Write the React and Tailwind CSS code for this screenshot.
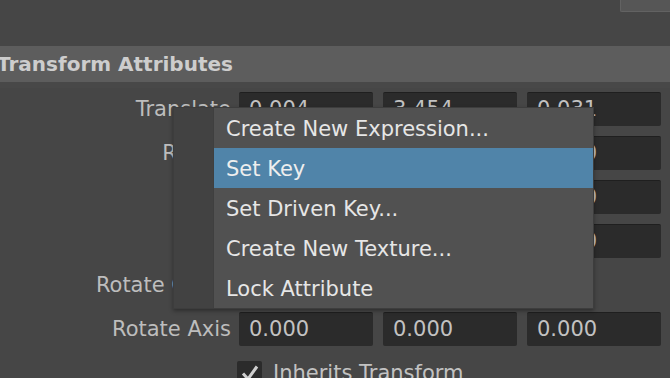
import React from "react";

const font = { fontFamily: '"DejaVu Sans", "Liberation Sans", sans-serif' };

function Field({ value }) {
  return (
    <div className="w-[134px] h-[34px] bg-[#2b2b2b] border-t border-[#1f1f1f] rounded-[2px] flex items-center pl-[10px] text-[21px] text-[#c2c2c2] leading-none">
      {value}
    </div>
  );
}

function Row({ label, values, children, tight }) {
  return (
    <div className="flex items-center h-[34px]">
      <div className={"w-[231px] text-right text-[21px] text-[#bdbdbd] leading-none " + (tight ? "tracking-[-1px]" : "")}>{label}</div>
      <div className="ml-[8px] flex gap-[10px]">
        {children || values.map((v, i) => <Field key={i} value={v} />)}
      </div>
    </div>
  );
}

export default function App() {
  const items = [
    "Create New Expression...",
    "Set Key",
    "Set Driven Key...",
    "Create New Texture...",
    "Lock Attribute",
  ];
  return (
    <div className="relative w-[670px] h-[378px] overflow-hidden bg-[#464646]" style={font}>
      <div className="flex justify-end h-[46px]">
        <div className="w-[50px] h-[12px] bg-[#565656] border-l border-b border-[#626262] rounded-bl-[2px]" />
      </div>
      <div className="h-[36px] bg-[#5d5d5d] flex items-center">
        <span className="ml-[-3px] text-[20px] font-bold text-[#cdcdcd] leading-none">Transform Attributes</span>
      </div>
      <div className="h-[6px] bg-[#484848]" />
      <div className="flex flex-col gap-[10px] pt-[4px]">
        <Row label="Translate" values={["0.004", "3.454", "0.031"]} />
        <Row label="Rotate" values={["0.000", "0.000", "0.000"]} />
        <Row label="Scale" values={["1.000", "1.000", "1.000"]} />
        <Row label="Shear" tight values={["0.000", "0.000", "0.000"]} />
        <Row label="Rotate Order">
          <div className="w-[134px] h-[34px] bg-[#5a5a5a] rounded-[2px] flex items-center pl-[10px] text-[21px] text-[#c2c2c2]">xyz</div>
        </Row>
        <Row label="Rotate Axis" values={["0.000", "0.000", "0.000"]} />
        <div className="flex items-center h-[34px] pl-[237px] gap-[11px]">
          <div className="w-[25px] h-[25px] bg-[#2b2b2b] rounded-[2px] flex items-center justify-center">
            <svg width="20" height="20" viewBox="0 0 20 20">
              <path d="M3 10.5 L8 16 L17 3.5" fill="none" stroke="#cfcfcf" strokeWidth="3" strokeLinejoin="miter" />
            </svg>
          </div>
          <span className="text-[21px] text-[#c2c2c2] leading-none">Inherits Transform</span>
        </div>
      </div>

      <div className="absolute left-[173px] top-[107px] w-[421px] h-[202px] flex border border-[#3d3d3d] shadow-[0_2px_4px_rgba(0,0,0,0.35)]">
        <div className="w-[40px] bg-[#424242] border-r border-[#3f3f3f]" />
        <div className="flex-1 bg-[#515151] flex flex-col">
          {items.map((t, i) => (
            <div
              key={t}
              className={
                "h-[40px] flex items-center pl-[12px] pt-[3px] text-[21px] leading-none " +
                (i === 1 ? "bg-[#5084a9] text-[#eeeeee]" : "text-[#e6e6e6]")
              }
            >
              {t}
            </div>
          ))}
        </div>
      </div>
    </div>
  );
}
